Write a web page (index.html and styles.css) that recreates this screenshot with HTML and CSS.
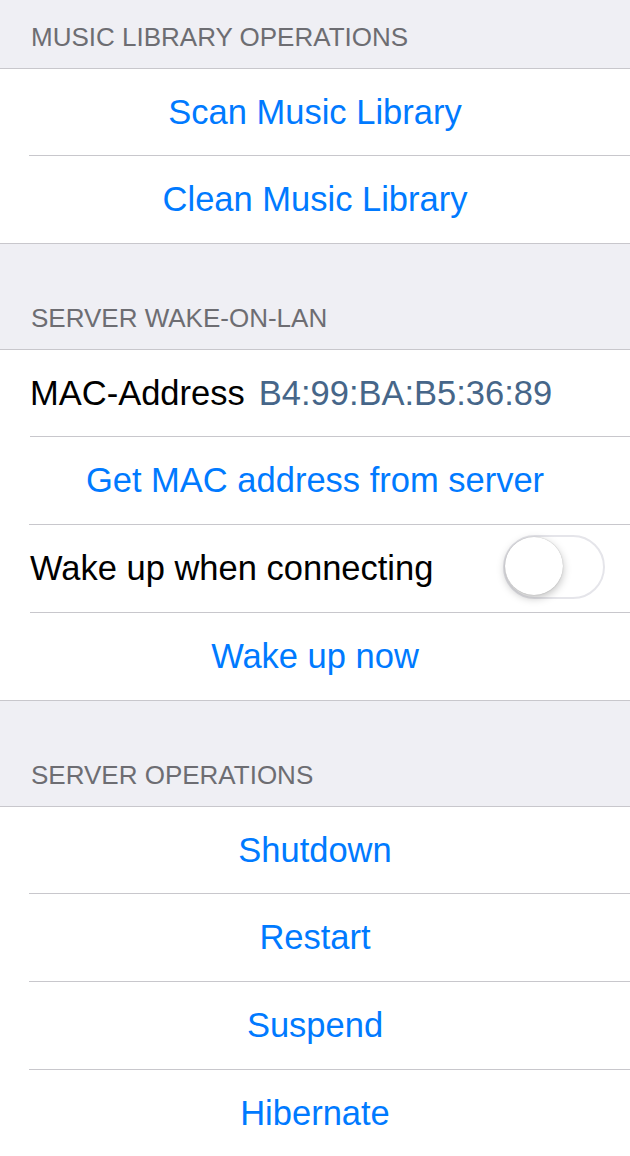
FILE: index.html
```html
<!DOCTYPE html>
<html lang="en">
<head>
    <meta charset="UTF-8">
    <meta name="viewport" content="width=device-width, initial-scale=1.0">
    <title>Server Settings</title>
    <link rel="stylesheet" href="styles.css">
</head>
<body>
    <div class="section-header first">MUSIC LIBRARY OPERATIONS</div>
    <div class="group">
        <div class="row action">Scan Music Library</div>
        <div class="row action">Clean Music Library</div>
    </div>

    <div class="section-header">SERVER WAKE-ON-LAN</div>
    <div class="group">
        <div class="row">
            <span class="label">MAC-Address</span>
            <span class="value">B4:99:BA:B5:36:89</span>
        </div>
        <div class="row action">Get MAC address from server</div>
        <div class="row switch-row">
            <span class="label">Wake up when connecting</span>
            <span class="switch"><span class="knob"></span></span>
        </div>
        <div class="row action">Wake up now</div>
    </div>

    <div class="section-header">SERVER OPERATIONS</div>
    <div class="group">
        <div class="row action">Shutdown</div>
        <div class="row action">Restart</div>
        <div class="row action">Suspend</div>
        <div class="row action">Hibernate</div>
    </div>
</body>
</html>
```

FILE: styles.css
```css
body {
    font-family: "Liberation Sans", Arial, sans-serif;
    background-color: #efeff4;
    margin: 0;
    padding: 0;
}
.section-header {
    height: 105px;
    box-sizing: border-box;
    padding: 0 0 15px 31px;
    display: flex;
    align-items: flex-end;
    font-size: 26px;
    color: #6d6d72;
}
.section-header.first {
    height: 68px;
}
.group {
    background-color: #ffffff;
    border-top: 1px solid #c8c7cc;
    border-bottom: 1px solid #c8c7cc;
}
.row {
    height: 87px;
    display: flex;
    align-items: center;
    margin-left: 30px;
    padding-right: 30px;
    font-size: 34.5px;
    color: #000000;
    border-bottom: 1px solid #c8c7cc;
}
.row:first-child {
    height: 86px;
}
.row:last-child {
    border-bottom: none;
}
.action {
    justify-content: center;
    color: #007aff;
    margin-left: 0;
    padding: 0;
    border-image: linear-gradient(to right, transparent 30px, #c8c7cc 30px) 1;
}
.action:last-child {
    border-image: none;
}
.value {
    color: #466689;
    margin-left: 14px;
}
.switch-row {
    justify-content: space-between;
    padding-right: 25px;
}
.switch {
    width: 98px;
    height: 60px;
    margin-top: -3px;
    border: 2px solid #e5e5ea;
    border-radius: 32px;
    position: relative;
    background-color: #ffffff;
}
.knob {
    position: absolute;
    top: 0;
    left: 0;
    width: 58px;
    height: 58px;
    border-radius: 50%;
    background-color: #ffffff;
    box-shadow: 0 3px 8px rgba(0, 0, 0, 0.25), 0 0 1px rgba(0, 0, 0, 0.3);
}
```
